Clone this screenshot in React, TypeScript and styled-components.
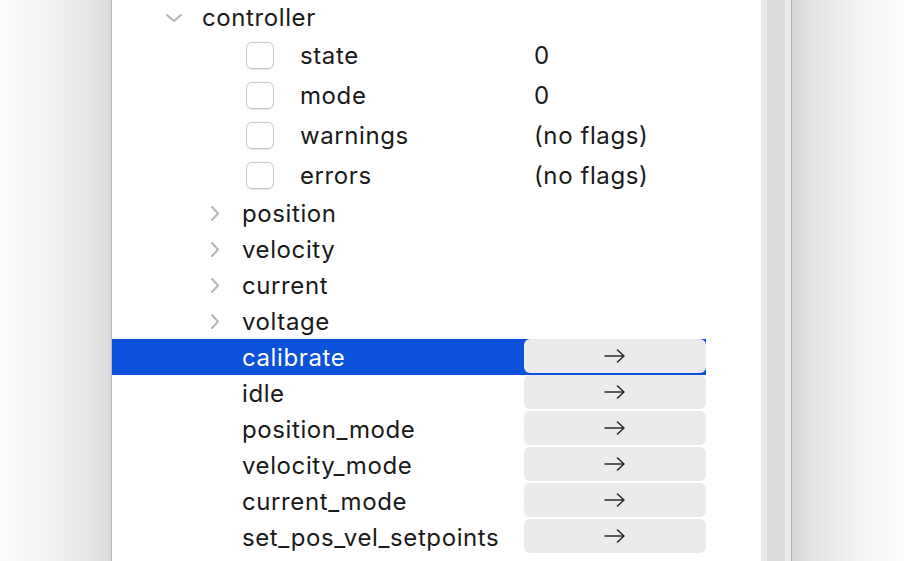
import React from 'react';
import styled, { createGlobalStyle } from 'styled-components';

const GlobalStyle = createGlobalStyle`
  html, body {
    margin: 0;
    padding: 0;
    height: 100%;
    overflow: hidden;
  }
  body {
    font-family: Inter, "Noto Sans", "Liberation Sans", sans-serif;
    background:
      linear-gradient(to right, #fbfbfb 0px, #f3f3f3 40px, #e6e6e6 90px, #d9d9d9 111px, transparent 111px),
      linear-gradient(to left, #fcfcfc 0px, #f2f2f2 50px, #e2e2e2 95px, #d3d3d3 112px, transparent 112px),
      #ffffff;
  }
`;

const Page = styled.div`
  height: 561px;
  display: flex;
  padding-left: 111px;
`;

const Window = styled.div`
  width: 681px;
  height: 100%;
  display: flex;
  background: #fff;
  border-left: 1px solid #b9b9b9;
  border-right: 1px solid #b4b4b4;
  box-sizing: border-box;
`;

const Outline = styled.div`
  flex: 1;
  display: flex;
  flex-direction: column;
  overflow: hidden;
`;

const Scrollbar = styled.div`
  width: 30px;
  height: 100%;
  box-sizing: border-box;
  background: #dcdcdd;
  border-left: 6px solid #eaeaea;
  border-right: 6px solid #eaeaea;
`;

const Row = styled.div<{ $h: number; $selected?: boolean }>`
  width: 594px;
  height: ${p => p.$h}px;
  flex-shrink: 0;
  display: grid;
  grid-template-columns: 412px 182px;
  align-items: center;
  background: ${p => (p.$selected ? '#0b51da' : 'transparent')};
  color: ${p => (p.$selected ? '#ffffff' : '#1a1a1a')};
  font-size: 24px;
  letter-spacing: 0.6px;
`;

const NameCell = styled.div<{ $indent: number }>`
  display: flex;
  align-items: center;
  padding-left: ${p => p.$indent}px;
  white-space: nowrap;
`;

const Chevron = styled.span<{ $w: number }>`
  width: ${p => p.$w}px;
  display: flex;
  align-items: center;
  flex-shrink: 0;
`;

const Check = styled.span`
  width: 26px;
  height: 25px;
  border: 1px solid #c9c9c9;
  border-radius: 6px;
  background: #fff;
  box-shadow: 0 0.5px 1px rgba(0, 0, 0, 0.1);
  margin-right: 26px;
  flex-shrink: 0;
`;

const Value = styled.div`
  padding-left: 10px;
  white-space: nowrap;
`;

const ActionButton = styled.button`
  align-self: start;
  height: 34px;
  margin: 0;
  border: none;
  border-radius: 6px;
  background: #ebebed;
  display: flex;
  align-items: center;
  justify-content: center;
  padding: 0;
`;

const Arrow = () => (
  <svg width="24" height="16" viewBox="0 0 24 16" fill="none" stroke="#2b2b2b" strokeWidth="1.6" strokeLinecap="round" strokeLinejoin="round">
    <path d="M2 8h19M14.5 2l6.5 6-6.5 6" />
  </svg>
);

const ChevronDown = () => (
  <svg width="18" height="10" viewBox="0 0 18 10" fill="none" stroke="#b6b6b6" strokeWidth="2" strokeLinecap="round" strokeLinejoin="round">
    <path d="M2 2l7 6 7-6" />
  </svg>
);

const ChevronRight = () => (
  <svg width="10" height="17" viewBox="0 0 10 17" fill="none" stroke="#b6b6b6" strokeWidth="2" strokeLinecap="round" strokeLinejoin="round">
    <path d="M2 2l6 6.5-6 6.5" />
  </svg>
);

const flags = [
  { name: 'state', value: '0' },
  { name: 'mode', value: '0' },
  { name: 'warnings', value: '(no flags)' },
  { name: 'errors', value: '(no flags)' },
];

const groups = ['position', 'velocity', 'current', 'voltage'];

const actions = ['calibrate', 'idle', 'position_mode', 'velocity_mode', 'current_mode', 'set_pos_vel_setpoints'];

export default function App() {
  return (
    <>
      <GlobalStyle />
      <Page>
        <Window>
          <Outline>
            <Row $h={35}>
              <NameCell $indent={53}>
                <Chevron $w={37}>
                  <ChevronDown />
                </Chevron>
                controller
              </NameCell>
            </Row>
            {flags.map(f => (
              <Row $h={40} key={f.name}>
                <NameCell $indent={134}>
                  <Check />
                  {f.name}
                </NameCell>
                <Value>{f.value}</Value>
              </Row>
            ))}
            {groups.map(g => (
              <Row $h={36} key={g}>
                <NameCell $indent={98}>
                  <Chevron $w={32}>
                    <ChevronRight />
                  </Chevron>
                  {g}
                </NameCell>
              </Row>
            ))}
            {actions.map((a, i) => (
              <Row $h={36} key={a} $selected={i === 0}>
                <NameCell $indent={130}>{a}</NameCell>
                <ActionButton>
                  <Arrow />
                </ActionButton>
              </Row>
            ))}
          </Outline>
          <Scrollbar />
        </Window>
      </Page>
    </>
  );
}
